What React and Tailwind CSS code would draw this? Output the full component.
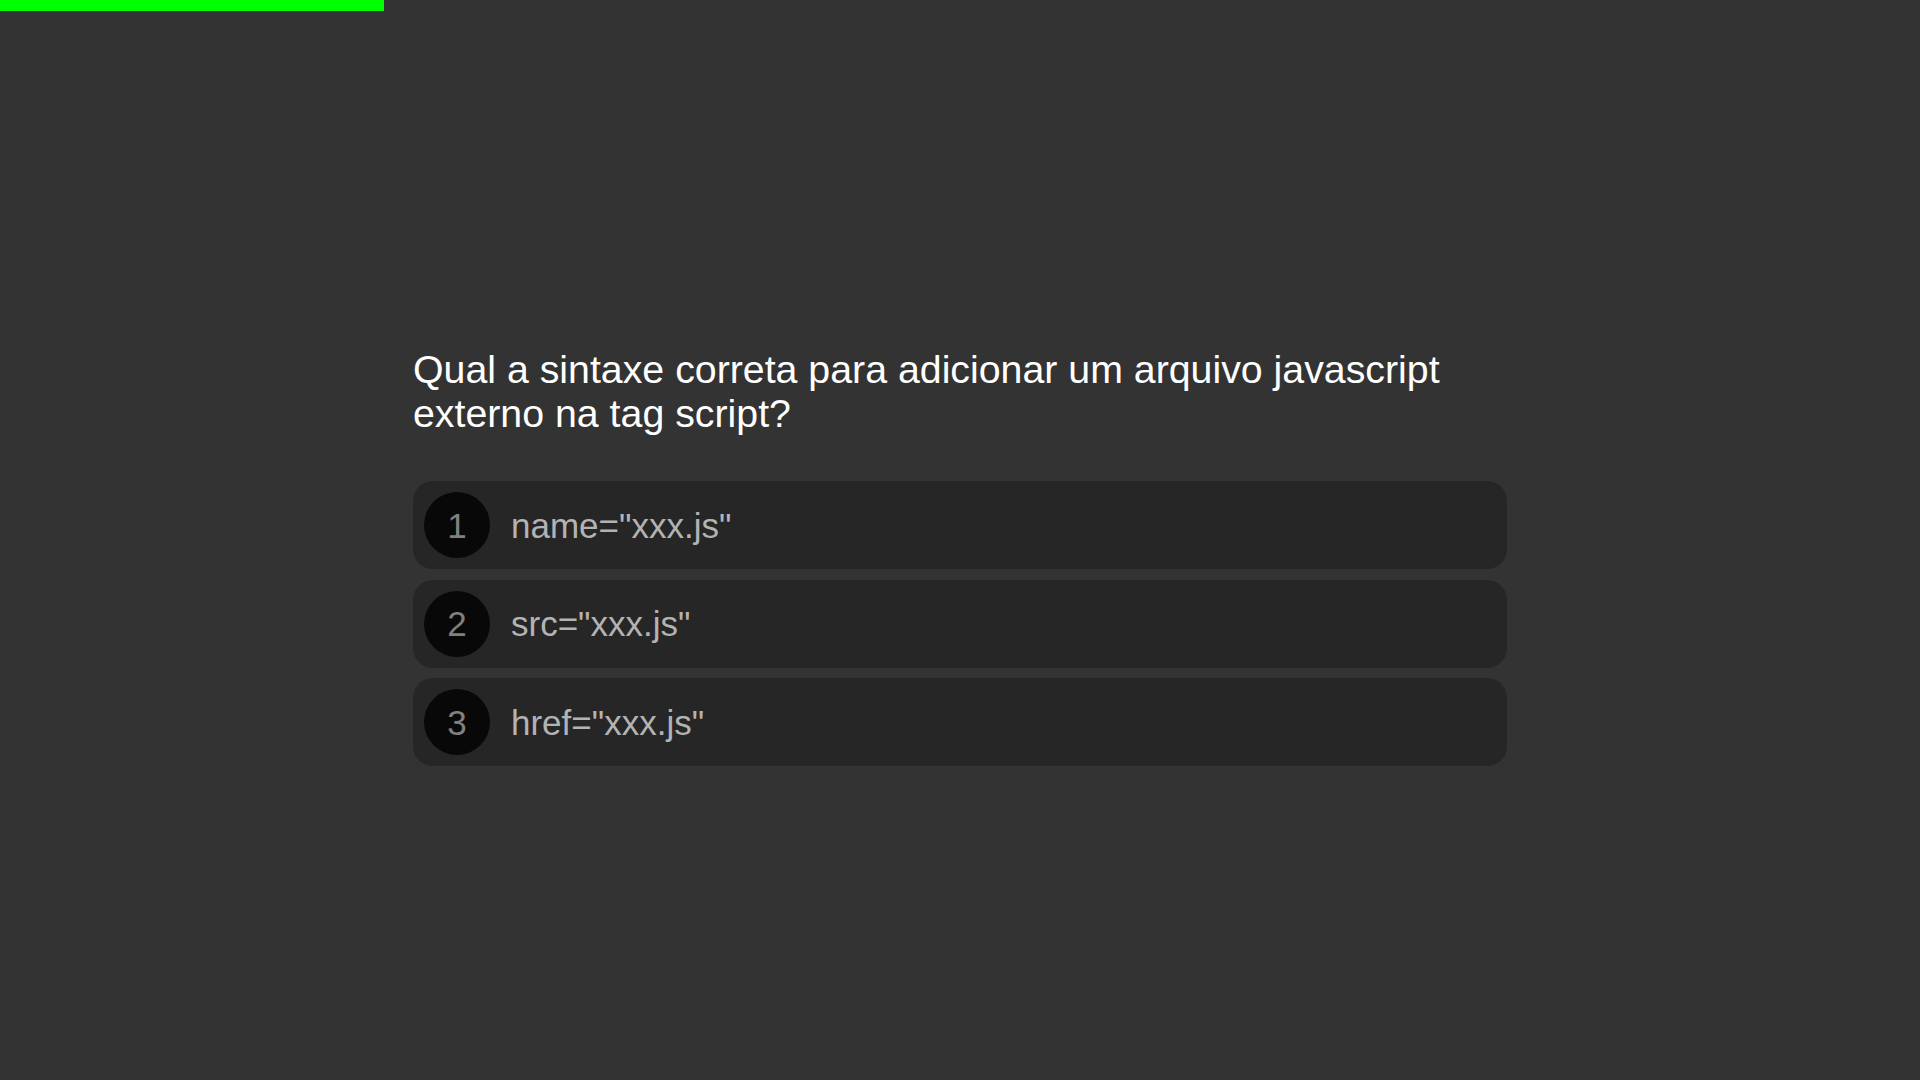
const options = ['name="xxx.js"', 'src="xxx.js"', 'href="xxx.js"']

const Option = ({ index, label }) => (
    <div className="flex items-center h-[88px] p-[11px] rounded-[20px] bg-[#262626]">
        <div className="flex items-center justify-center w-[66px] h-[66px] rounded-full bg-[#080808] text-[#808080] text-[35px] leading-none shrink-0">
            {index}
        </div>
        <span className="ml-[21px] text-[35px] leading-none text-[#b3b3b3]">{label}</span>
    </div>
)

export default function App() {
    return (
        <div
            className="min-h-screen w-full bg-[#333333]"
            style={{ fontFamily: '"Liberation Sans", Arial, sans-serif' }}
        >
            {/* progress bar */}
            <div className="h-[11px] w-[384px] bg-[#00ff00]" />

            <div className="w-[1094px] mx-auto pt-[336px]">
                <h1 className="text-[39.3px] leading-[44px] text-white font-normal">
                    Qual a sintaxe correta para adicionar um arquivo javascript externo na tag script?
                </h1>
                <div className="mt-[46px] flex flex-col gap-[10.5px]">
                    {options.map((label, i) => (
                        <Option key={label} index={i + 1} label={label} />
                    ))}
                </div>
            </div>
        </div>
    )
}
